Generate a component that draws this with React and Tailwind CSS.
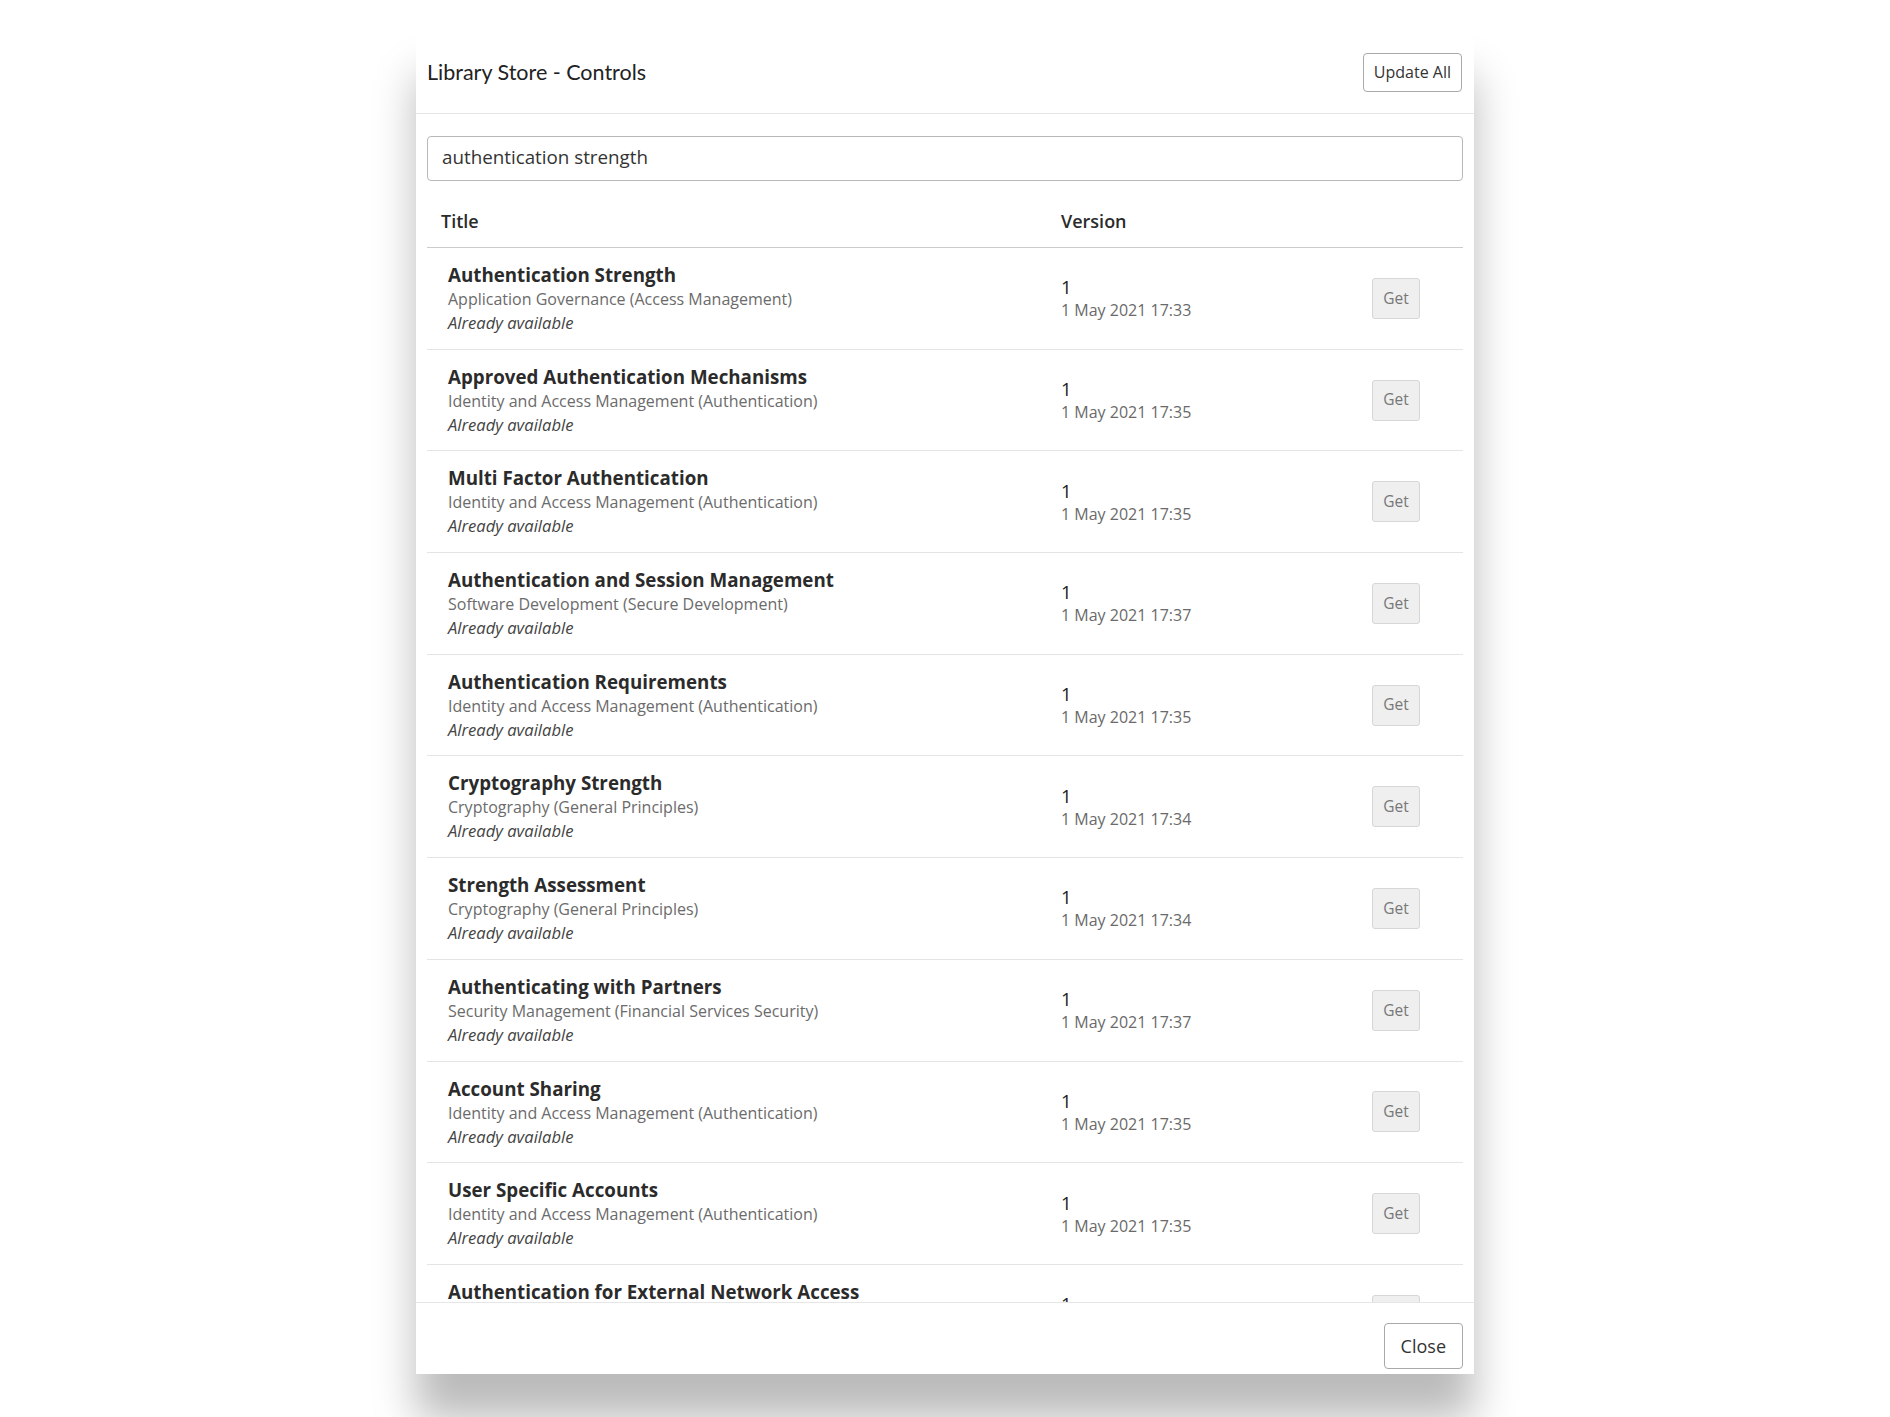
import { useState } from "react";

const controls = [
  {
    title: "Authentication Strength",
    area: "Application Governance (Access Management)",
    version: "1",
    date: "1 May 2021 17:33",
  },
  {
    title: "Approved Authentication Mechanisms",
    area: "Identity and Access Management (Authentication)",
    version: "1",
    date: "1 May 2021 17:35",
  },
  {
    title: "Multi Factor Authentication",
    area: "Identity and Access Management (Authentication)",
    version: "1",
    date: "1 May 2021 17:35",
  },
  {
    title: "Authentication and Session Management",
    area: "Software Development (Secure Development)",
    version: "1",
    date: "1 May 2021 17:37",
  },
  {
    title: "Authentication Requirements",
    area: "Identity and Access Management (Authentication)",
    version: "1",
    date: "1 May 2021 17:35",
  },
  {
    title: "Cryptography Strength",
    area: "Cryptography (General Principles)",
    version: "1",
    date: "1 May 2021 17:34",
  },
  {
    title: "Strength Assessment",
    area: "Cryptography (General Principles)",
    version: "1",
    date: "1 May 2021 17:34",
  },
  {
    title: "Authenticating with Partners",
    area: "Security Management (Financial Services Security)",
    version: "1",
    date: "1 May 2021 17:37",
  },
  {
    title: "Account Sharing",
    area: "Identity and Access Management (Authentication)",
    version: "1",
    date: "1 May 2021 17:35",
  },
  {
    title: "User Specific Accounts",
    area: "Identity and Access Management (Authentication)",
    version: "1",
    date: "1 May 2021 17:35",
  },
  {
    title: "Authentication for External Network Access",
    area: "Network Security (Remote Access)",
    version: "1",
    date: "1 May 2021 17:36",
  },
];

const ControlRow = ({ item }) => (
  <div className="grid grid-cols-[620px_310px_1fr] border-b border-[#e4e4e4]">
    <div className="pb-[13.7px] pl-[21px] pt-[15px]">
      <div className="text-[18.75px] font-bold leading-[24px] text-[#2b2b2b]">
        {item.title}
      </div>
      <div className="text-[16px] leading-[24px] text-[#6b6b6b]">
        {item.area}
      </div>
      <div className="text-[16.6px] italic leading-[24px] text-[#444]">
        Already available
      </div>
    </div>
    <div className="flex flex-col justify-center pl-[14px]">
      <div className="text-[18.5px] leading-[24px] text-[#222]">
        {item.version}
      </div>
      <div className="text-[16px] leading-[22px] text-[#6a6a6a]">
        {item.date}
      </div>
    </div>
    <div className="flex items-center pl-[15px]">
      <button className="h-[41px] w-[48px] rounded-[3px] border border-[#d6d6d6] bg-[#efefef] text-[15.5px] text-[#777]">
        Get
      </button>
    </div>
  </div>
);

export default function App() {
  const [query, setQuery] = useState("authentication strength");

  return (
    <div className="min-h-screen bg-white pt-[31px] font-['Open_Sans',sans-serif]">
      <div className="mx-auto flex h-[1343px] w-[1058px] flex-col bg-white shadow-[0_45px_40px_rgba(0,0,0,0.27)]">
        {/* Header */}
        <div className="flex h-[83px] shrink-0 items-center justify-between border-b border-[#e6e6e6] pl-[11px] pr-[12px]">
          <h2 className="font-['Lato',sans-serif] text-[21.5px] text-[#222]">
            Library Store - Controls
          </h2>
          <button className="h-[39px] rounded-[4px] border border-[#a9a9a9] px-[10px] text-[16px] text-[#333]">
            Update All
          </button>
        </div>

        {/* Body */}
        <div className="min-h-0 flex-1 overflow-hidden px-[11px] pt-[22px]">
          <input
            value={query}
            onChange={(e) => setQuery(e.target.value)}
            className="h-[45px] w-full rounded-[4px] border border-[#b8b8b8] px-[14px] pb-[3px] text-[18.8px] text-[#333] outline-none"
          />
          <div className="mt-[16px] grid grid-cols-[620px_310px_1fr] border-b border-[#cccccc] text-[18px] font-semibold leading-[24px] text-[#2b2b2b]">
            <div className="pb-[14px] pl-[14px] pt-[12px]">Title</div>
            <div className="pb-[14px] pl-[14px] pt-[12px]">Version</div>
            <div />
          </div>
          {controls.map((item) => (
            <ControlRow key={item.title} item={item} />
          ))}
        </div>

        {/* Footer */}
        <div className="flex h-[72px] shrink-0 items-start justify-end border-t border-[#e6e6e6] pr-[11px] pt-[20px]">
          <button className="h-[46px] rounded-[4px] border border-[#a9a9a9] px-[16px] text-[18px] text-[#333]">
            Close
          </button>
        </div>
      </div>
    </div>
  );
}
